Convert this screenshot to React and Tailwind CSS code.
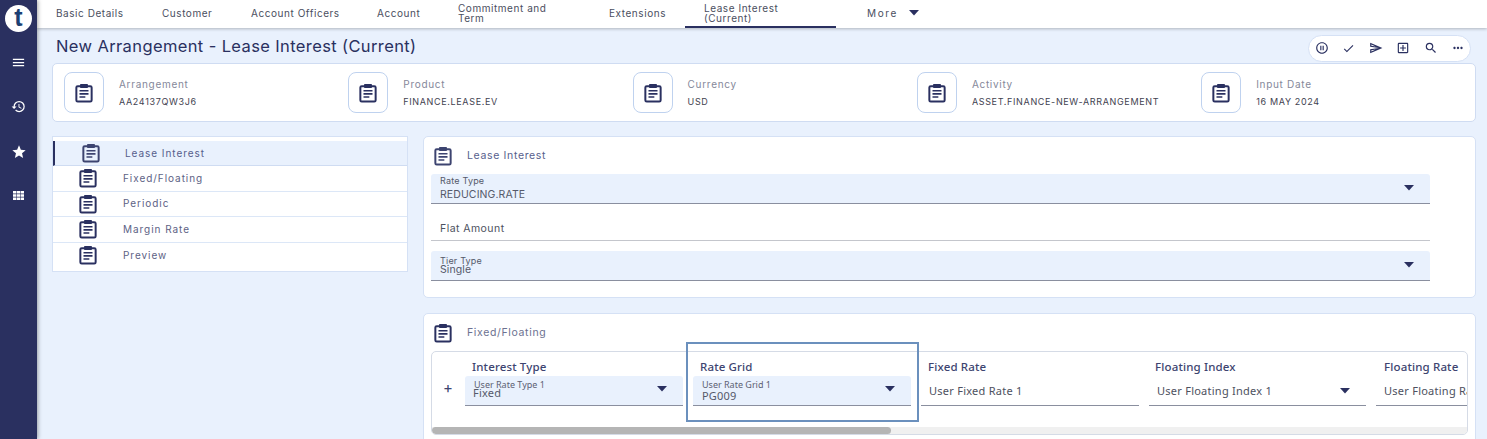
import React from "react";
import { MdMenu, MdHistory, MdStar, MdPauseCircleOutline, MdCheck, MdOutlineSend, MdOutlineAddBox, MdSearch, MdMoreHoriz } from "react-icons/md";

const sans = "font-['Inter','Noto_Sans',sans-serif]";

function Clip({ className = "" }) {
  return (
    <svg viewBox="0 0 20 22" fill="none" className={className} aria-hidden="true">
      <rect x="1.500" y="3.500" width="17" height="17" rx="1.500" stroke="currentColor" strokeWidth="2.200" />
      <path d="M6.500 4.500V1.800h7v2.700z" stroke="currentColor" strokeWidth="1.800" fill="currentColor" strokeLinejoin="round" />
      <path d="M5 8.500h10M5 12h10M5 15.500h6.500" stroke="currentColor" strokeWidth="1.800" />
    </svg>
  );
}

function Caret({ className = "" }) {
  return (
    <svg viewBox="0 0 10 6" className={className} aria-hidden="true">
      <path d="M0 0h10L5 5.500z" fill="#2a3060" />
    </svg>
  );
}

function GridIcon({ className = "" }) {
  return (
    <svg viewBox="0 0 14 12" className={className} fill="currentColor" aria-hidden="true">
      <path d="M1 1h3.600v2.800H1zM5.200 1h3.600v2.800H5.200zM9.400 1H13v2.800H9.400zM1 4.600h3.600v2.800H1zM5.200 4.600h3.600v2.800H5.200zM9.400 4.600H13v2.800H9.400zM1 8.200h3.600V11H1zM5.200 8.200h3.600V11H5.200zM9.400 8.200H13V11H9.400z" />
    </svg>
  );
}

const tabs = [
  ["Basic Details", "w-[106px]"],
  ["Customer", "w-[89px]"],
  ["Account Officers", "w-[126px]"],
  ["Account", "w-[81px]"],
  ["Commitment and Term", "w-[151px] pr-[50px]"],
  ["Extensions", "w-[76px]"],
];

const summary = [
  ["Arrangement", "AA24137QW3J6"],
  ["Product", "FINANCE.LEASE.EV"],
  ["Currency", "USD"],
  ["Activity", "ASSET.FINANCE-NEW-ARRANGEMENT"],
  ["Input Date", "16 MAY 2024"],
];

const menu = ["Fixed/Floating", "Periodic", "Margin Rate", "Preview"];

function SelectField({ label, value, tight }) {
  return (
    <div className="h-[30px] w-[999px] bg-[#e9f1fd] rounded-t-[3px] border-b border-[#8a8f9f] pl-[9px] pr-[16px] flex items-center justify-between">
      <div className="flex flex-col">
        <span className="text-[9px] leading-[10px] text-[#55596a] tracking-[0.2px]">{label}</span>
        <span className={`text-[10.500px] leading-[12px] text-[#55596a] tracking-[0.1px] ${tight ? "-mt-[2px]" : "mt-[3px]"}`}>{value}</span>
      </div>
      <Caret className="w-[10px] h-[6px] mb-[1px]" />
    </div>
  );
}

function GridCol({ head, children, headPl = "pl-[7px]", width = "w-[218px]" }) {
  return (
    <div className={`${width} shrink-0`}>
      <div className={`h-[24px] ${headPl} text-[11.500px] font-medium leading-[30px] text-[#3d4470] tracking-[0.15px] font-['Noto_Sans',sans-serif]`}>{head}</div>
      {children}
    </div>
  );
}

function GridSelect({ label, value, gap, valueX = "" }) {
  return (
    <div className="h-[30px] bg-[#e9f1fd] rounded-t-[3px] border-b border-[#8a8f9f] pl-[9px] pr-[16px] flex items-center justify-between font-['Noto_Sans',sans-serif]">
      <div className="flex flex-col self-start pt-[4px]">
        <span className="text-[9px] leading-[9px] text-[#5d6173]">{label}</span>
        <span className={`text-[11px] leading-[11px] text-[#55596a] tracking-[0.2px] ${gap} ${valueX}`}>{value}</span>
      </div>
      <Caret className="w-[10px] h-[6px] mb-[4px]" />
    </div>
  );
}

function GridInput({ value, caret }) {
  return (
    <div className="h-[30px] border-b border-[#8a8f9f] pl-[8px] pr-[16px] flex items-center justify-between font-['Noto_Sans',sans-serif] overflow-hidden whitespace-nowrap">
      <span className="text-[11px] text-[#4d5160] tracking-[0.25px] mt-[1px]">{value}</span>
      {caret && <Caret className="w-[10px] h-[6px] shrink-0" />}
    </div>
  );
}

export default function App() {
  return (
    <div className={`h-[439px] w-full overflow-hidden flex bg-[#e9f1fd] ${sans}`}>
      <aside className="w-[37px] shrink-0 bg-[#2a3060] z-20 shadow-[1px_0_4px_rgba(0,0,0,0.35)] flex flex-col items-center text-white">
        <div className="mt-[5px] w-[27px] h-[27px] rounded-full bg-white flex items-center justify-center text-[#1c3f73] text-[25px] font-bold leading-none font-['Liberation_Sans',sans-serif]">
          <span className="-mt-[2px]">t</span>
        </div>
        <MdMenu className="mt-[23px] w-[15px] h-[15px]" />
        <MdHistory className="mt-[29px] w-[15px] h-[15px]" />
        <MdStar className="mt-[30px] w-[16px] h-[16px]" />
        <GridIcon className="mt-[30px] w-[13px] h-[11px]" />
      </aside>

      <main className="flex-1 min-w-0 flex flex-col">
        <nav className="h-[28px] shrink-0 bg-white shadow-[0_1px_3px_rgba(0,0,0,0.25)] pl-[19px] flex items-stretch text-[10px] leading-[10px] text-[#4a4e5e] tracking-[0.55px] z-10">
          {tabs.map(([t, w]) => (
            <div key={t} className={`${w} flex items-center pb-[2px]`}>{t}</div>
          ))}
          <div className="w-[151px] pl-[19px] pr-[35px] flex items-center border-b-2 border-[#2a3060] text-[#4a4e5e]">Lease Interest (Current)</div>
          <div className="ml-[31px] flex items-center gap-[11px] tracking-[1.600px] pb-[2px]">
            More
            <Caret className="w-[10px] h-[6px]" />
          </div>
        </nav>

        <div className="h-[35px] shrink-0 flex items-center justify-between pl-[19px] pr-[16px]">
          <h1 className="text-[16.500px] font-normal text-[#2a3060] tracking-[0.38px] mt-[2px] whitespace-nowrap">New Arrangement - Lease Interest (Current)</h1>
          <div className="w-[163px] h-[27px] mt-[5px] bg-white rounded-full border border-[#d5e1f5] flex items-center justify-between pl-[6px] pr-[5px] text-[#2a3060]">
            <MdPauseCircleOutline className="w-[14px] h-[14px]" />
            <MdCheck className="w-[13px] h-[13px]" />
            <MdOutlineSend className="w-[14px] h-[14px]" />
            <MdOutlineAddBox className="w-[14px] h-[14px]" />
            <MdSearch className="w-[14px] h-[14px]" />
            <MdMoreHoriz className="w-[14px] h-[14px]" />
          </div>
        </div>

        <section className="ml-[15px] mr-[11px] h-[59px] shrink-0 bg-white rounded-[5px] border border-[#cfdcf2] pl-[11px] grid grid-cols-[repeat(5,284.3px)] items-center">
          {summary.map(([k, v]) => (
            <div key={k} className="flex items-center">
              <div className="w-[40px] h-[41px] rounded-[8px] border border-[#bfd2ef] flex items-center justify-center text-[#2a3060]">
                <Clip className="w-[18px] h-[20px]" />
              </div>
              <div className="ml-[15px] flex flex-col gap-[6px]">
                <span className="text-[10px] leading-[12px] text-[#85889a] tracking-[0.7px]">{k}</span>
                <span className="text-[9px] leading-[11px] text-[#3f4250] tracking-[0.65px] whitespace-nowrap">{v}</span>
              </div>
            </div>
          ))}
        </section>

        <div className="ml-[15px] mt-[14px] flex gap-[15px] items-start">
          <div className="w-[356px] h-[136px] shrink-0 bg-white border border-[#d5e1f5] pt-[4px] text-[10px] tracking-[0.95px] text-[#5d6285]">
            <div className="h-[25px] bg-[#e9f1fd] border-l-[2px] border-[#2a3060] border-b border-b-[#cfdcf2] flex items-center text-[#565e8c]">
              <Clip className="ml-[27px] w-[18px] h-[20px] text-[#3d4470]" />
              <span className="ml-[25px]">Lease Interest</span>
            </div>
            {menu.map((m) => (
              <div key={m} className="h-[25.500px] border-b border-[#dce7f7] last:border-b-0 flex items-center">
                <Clip className="ml-[26px] w-[18px] h-[20px] text-[#2a3060]" />
                <span className="ml-[26px]">{m}</span>
              </div>
            ))}
          </div>

          <div className="w-[1053px] shrink-0 flex flex-col gap-[15px]">
            <section className="h-[162px] bg-white rounded-[5px] border border-[#d5e1f5] pl-[7px]">
              <div className="h-[37px] flex items-center pl-[3px]">
                <Clip className="w-[18px] h-[20px] text-[#3d4470]" />
                <span className="ml-[15px] text-[10.500px] tracking-[0.65px] text-[#565e8c]">Lease Interest</span>
              </div>
              <SelectField label="Rate Type" value="REDUCING.RATE" />
              <div className="mt-[7px] h-[30px] w-[999px] border-b border-[#c4c6cc] pl-[9px] pt-[7px] flex items-center text-[10.500px] text-[#4d5160] tracking-[0.45px]">
                Flat Amount
              </div>
              <div className="mt-[10px]">
                <SelectField label="Tier Type" value="Single" tight />
              </div>
            </section>

            <section className="relative h-[140px] bg-white rounded-[5px] border border-[#d5e1f5] pl-[7px]">
              <div className="h-[37px] flex items-center pl-[3px]">
                <Clip className="w-[18px] h-[20px] text-[#2a3060]" />
                <span className="ml-[15px] text-[10.500px] tracking-[0.65px] text-[#6c7190] mt-[1px]">Fixed/Floating</span>
              </div>
              <div className="w-[1037px] h-[84px] rounded-[5px] border border-[#d5dbe6] overflow-hidden flex flex-col">
                <div className="h-[75px] flex overflow-hidden">
                  <div className="w-[33px] shrink-0 pt-[26px] pl-[11px] text-[15px] leading-[20px] text-[#3d4470]">+</div>
                  <div className="flex gap-[10px]">
                    <GridCol head="Interest Type"><GridSelect label="User Rate Type 1" value="Fixed" gap="-mt-[2px]" valueX="-ml-[1px]" /></GridCol>
                    <GridCol head="Rate Grid"><GridSelect label="User Rate Grid 1" value="PG009" gap="mt-[1px]" /></GridCol>
                    <GridCol head="Fixed Rate"><GridInput value="User Fixed Rate 1" /></GridCol>
                    <GridCol head="Floating Index" headPl="pl-[6px]" width="w-[217px]"><GridInput value="User Floating Index 1" caret /></GridCol>
                    <GridCol head="Floating Rate" headPl="pl-[8px]"><GridInput value="User Floating Rate 1" /></GridCol>
                  </div>
                </div>
                <div className="h-[7px] bg-[#f0f0f0]">
                  <div className="w-[459px] h-full rounded-full bg-[#b5b5b5]" />
                </div>
              </div>
              <div className="absolute left-[262px] top-[28px] w-[233px] h-[80px] border-2 border-[#6b90bd] pointer-events-none" />
            </section>
          </div>
        </div>
      </main>
    </div>
  );
}
